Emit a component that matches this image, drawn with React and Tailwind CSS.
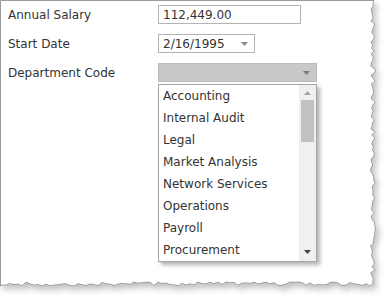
import React from 'react';

const DEPARTMENTS = [
  'Accounting',
  'Internal Audit',
  'Legal',
  'Market Analysis',
  'Network Services',
  'Operations',
  'Payroll',
  'Procurement',
];

// seeded jitter for the torn paper edge
let seed = 7;
const rand = () => {
  seed = (seed * 9301 + 49297) % 233280;
  return seed / 233280;
};

const buildEdge = () => {
  const pts = ['M0.5 0.5', 'L374 0.5'];
  for (let y = 3; y <= 284; y += 3) {
    pts.push(`L${(373 + rand() * 5 - 2.5).toFixed(1)} ${y}`);
  }
  for (let x = 374; x >= 0; x -= 4) {
    pts.push(`L${x} ${(285 + rand() * 4 - 3).toFixed(1)}`);
  }
  pts.push('L0.5 286', 'Z');
  return pts.join(' ');
};

const PAPER = buildEdge();

const Caret = ({ className = '' }) => (
  <svg width="7" height="4" viewBox="0 0 7 4" className={className}>
    <path d="M0 0 L7 0 L3.5 4 Z" fill="currentColor" />
  </svg>
);

const Paper = () => (
  <svg width="392" height="303" className="absolute inset-0">
    <defs>
      <filter id="shade" x="-5%" y="-5%" width="115%" height="115%">
        <feDropShadow dx="3" dy="4" stdDeviation="3" floodColor="#000" floodOpacity="0.25" />
      </filter>
    </defs>
    <path d={PAPER} fill="#fff" stroke="#9a9a9a" strokeWidth="1" filter="url(#shade)" />
  </svg>
);

export default function App() {
  return (
    <div
      className="relative w-[392px] h-[303px] bg-white overflow-hidden text-[12px] text-[#333]"
      style={{ fontFamily: '"DejaVu Sans", Verdana, sans-serif' }}
    >
      <Paper />

      <div className="relative pl-2 pt-[5px]">
        <div className="flex items-center h-[19px]">
          <span className="w-[150px]">Annual Salary</span>
          <div className="w-[143px] h-[19px] border border-[#b4b4b4] bg-white flex items-center pl-1">
            112,449.00
          </div>
        </div>

        <div className="flex items-center h-[19px] mt-[10px]">
          <span className="w-[150px]">Start Date</span>
          <div className="w-[97px] h-[19px] border border-[#b4b4b4] bg-white flex items-center justify-between pl-1 pr-[6px]">
            <span>2/16/1995</span>
            <Caret className="text-[#888]" />
          </div>
        </div>

        <div className="flex items-center h-[19px] mt-[10px]">
          <span className="w-[150px]">Department Code</span>
          <div className="w-[159px] h-[19px] border border-[#b9b9b9] bg-[#c8c8c8] flex items-center justify-end pr-[6px]">
            <Caret className="text-[#7a7a7a]" />
          </div>
        </div>

        <div className="ml-[150px] mt-[2px] w-[159px] border border-[#a6a6a6] bg-white flex shadow-[3px_3px_4px_rgba(0,0,0,0.3)]">
          <ul className="flex-1 pl-1">
            {DEPARTMENTS.map((d) => (
              <li key={d} className="h-[22px] flex items-center">
                {d}
              </li>
            ))}
          </ul>
          <div className="w-[17px] bg-[#f0f0f0] flex flex-col items-center pt-[6px] pb-[7px]">
            <svg width="7" height="4" viewBox="0 0 7 4">
              <path d="M0 4 L7 4 L3.5 0 Z" fill="#a3a3a3" />
            </svg>
            <div className="w-[13px] h-[42px] bg-[#c1c1c1] mt-[5px]" />
            <div className="flex-1" />
            <svg width="7" height="4" viewBox="0 0 7 4">
              <path d="M0 0 L7 0 L3.5 4 Z" fill="#454545" />
            </svg>
          </div>
        </div>
      </div>
    </div>
  );
}
